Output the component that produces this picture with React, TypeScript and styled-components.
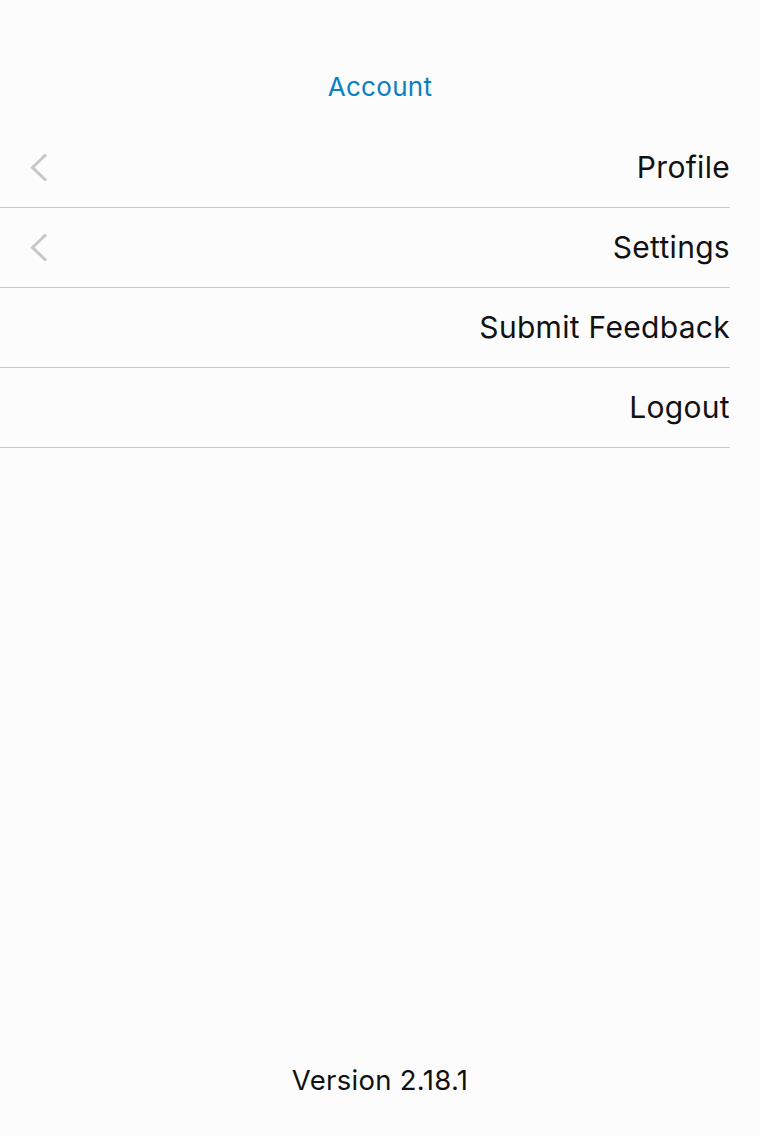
import React from "react";
import styled, { createGlobalStyle } from "styled-components";

const Global = createGlobalStyle`
  html, body { margin: 0; padding: 0; background: #fcfcfc; }
  body { font-family: Inter, "Noto Sans", "Liberation Sans", sans-serif; -webkit-font-smoothing: antialiased; }
`;

const Page = styled.div`
  min-height: 100vh;
  display: flex;
  flex-direction: column;
  background: #fcfcfc;
`;

const Header = styled.header`
  height: 128px;
  display: flex;
  justify-content: center;
  align-items: flex-start;
  padding-top: 69px;
  box-sizing: border-box;
`;

const Title = styled.h1`
  margin: 0;
  font-size: 26px;
  line-height: 36px;
  font-weight: 400;
  letter-spacing: 0.3px;
  color: #0a7fc2;
`;

const List = styled.ul`
  list-style: none;
  margin: 0 30px 0 0;
  padding: 0;
`;

const Row = styled.li`
  height: 80px;
  display: flex;
  align-items: center;
  justify-content: space-between;
  border-bottom: 1px solid #c8c7cc;
  box-sizing: border-box;
  padding-left: 30px;
`;

const Label = styled.span`
  margin-left: auto;
  padding-bottom: 2px;
  font-size: 30px;
  line-height: 36px;
  color: #111;
  letter-spacing: 0.3px;
`;

const Spacer = styled.div`
  flex: 1;
`;

const Footer = styled.footer`
  display: flex;
  justify-content: center;
  padding-bottom: 38px;
`;

const Version = styled.span`
  font-size: 27.5px;
  line-height: 36px;
  letter-spacing: 0.3px;
  color: #111;
`;

const Chevron = () => (
  <svg width="18" height="27" viewBox="0 0 18 27" fill="none">
    <path d="M15 1.5 L2.5 13.5 L15 25.5" stroke="#c7c7cc" strokeWidth="3" strokeLinecap="square" />
  </svg>
);

const items = [
  { label: "Profile", chevron: true },
  { label: "Settings", chevron: true },
  { label: "Submit Feedback", chevron: false },
  { label: "Logout", chevron: false },
];

export default function App() {
  return (
    <Page>
      <Global />
      <Header>
        <Title>Account</Title>
      </Header>
      <List>
        {items.map((it) => (
          <Row key={it.label}>
            {it.chevron && <Chevron />}
            <Label>{it.label}</Label>
          </Row>
        ))}
      </List>
      <Spacer />
      <Footer>
        <Version>Version 2.18.1</Version>
      </Footer>
    </Page>
  );
}
